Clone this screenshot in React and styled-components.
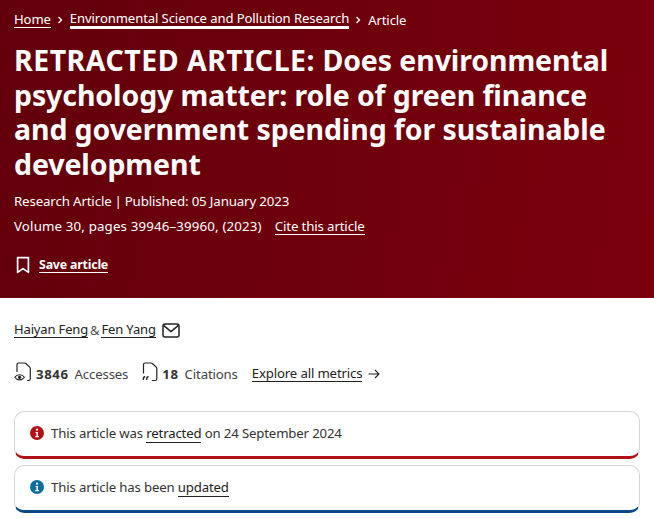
import React from 'react'
import styled, { createGlobalStyle } from 'styled-components'

const Global = createGlobalStyle`
  html, body { margin: 0; padding: 0; background: #fff; }
  body { font-family: "Noto Sans", "Open Sans", sans-serif; color: #222; }
`

function BookmarkIcon() {
  return (
    <svg width="14" height="18" viewBox="0 0 14 18" fill="none" stroke="#fff" strokeWidth="1.7" strokeLinejoin="round">
      <path d="M1.6 1.6h10.8v14.8L7 12.6l-5.4 3.800z" />
    </svg>
  )
}

function MailIcon() {
  return (
    <svg width="18" height="15" viewBox="0 0 18 15" fill="none" stroke="#222" strokeWidth="1.500" strokeLinejoin="round">
      <rect x="1" y="1" width="16" height="13" rx="2" />
      <path d="M1.600 2.400 9 8.600l7.400-6.200" />
    </svg>
  )
}

function AccessIcon() {
  return (
    <svg width="18" height="20" viewBox="0 0 18 20" fill="none" stroke="#222" strokeWidth="1.200" strokeLinecap="round">
      <path d="M3 9.500V2.800Q3 1 4.800 1h5.700q.8 0 1.400.5l3.800 3.600q.6.600.6 1.400v10.200q0 1.800-1.800 1.800h-1" />
      <path d="M.8 15.300c2.300-3.400 7.300-3.400 9.600 0-2.300 3.400-7.300 3.400-9.600 0z" strokeWidth="1.100" />
      <circle cx="5.600" cy="15.300" r="1.600" fill="#222" stroke="none" />
    </svg>
  )
}

function CiteIcon() {
  return (
    <svg width="16" height="20" viewBox="0 0 16 20" fill="none" stroke="#222" strokeWidth="1.200" strokeLinecap="round">
      <path d="M1.500 11V2.800Q1.500 1 3.300 1h5.700q.8 0 1.400.5l3.800 3.600q.6.600.6 1.400v10.200q0 1.800-1.800 1.800h-2.600" />
      <path d="M2.600 14.800q-1.300.5-1.300 2.400M6 14.800q-1.300.5-1.300 2.400" strokeWidth="1.500" />
    </svg>
  )
}

function ArrowIcon() {
  return (
    <svg width="12" height="10" viewBox="0 0 12 10" fill="none" stroke="#222" strokeWidth="1.100">
      <path d="M.5 5h10.500M7 1l4 4-4 4" />
    </svg>
  )
}

function ChevronIcon() {
  return (
    <svg width="7" height="8" viewBox="0 0 7 8" fill="none" stroke="#fff" strokeWidth="1.300">
      <path d="M1.500 1l3 3-3 3" />
    </svg>
  )
}

function InfoIcon({ color }) {
  return (
    <svg width="14" height="14" viewBox="0 0 14 14">
      <circle cx="7" cy="7" r="7" fill={color} />
      <circle cx="7" cy="3.700" r="1.100" fill="#fff" />
      <path d="M5.500 5.900h2.400v4h1v1.300H5.300V9.900h1.100V7.100H5.500z" fill="#fff" />
    </svg>
  )
}

const Hero = styled.header`
  height: 298px;
  box-sizing: border-box;
  padding: 11px 14px 0;
  color: #fff;
  background: linear-gradient(100deg, #62000b 0%, #7a000c 100%);
`

const Crumbs = styled.nav`
  display: flex;
  align-items: center;
  height: 17px;
  font-size: 13.100px;
  letter-spacing: -0.1px;
`

const Crumb = styled.a`
  color: #fff;
  line-height: 16px;
  border-bottom: ${p => p.$thick ? 3 : 1}px solid #fff;
`

const Sep = styled.span`
  display: flex;
  margin: 0 6px;
`

const Title = styled.h1`
  margin: 15px 0 0;
  font-size: 28.500px;
  line-height: 34.600px;
  font-weight: 700;
  letter-spacing: -0.1px;
`

const Prefix = styled.span`
  letter-spacing: 0.5px;
`

const Meta = styled.div`
  display: flex;
  align-items: center;
  font-size: 13.300px;
  line-height: 17px;
  letter-spacing: -0.15px;
  margin-top: ${p => p.$top}px;
`

const Pipe = styled.span`
  margin: 0 3px;
`

const Volume = styled.span`
  letter-spacing: 0.15px;
`

const MetaLink = styled.a`
  margin-left: 13px;
  color: #fff;
  line-height: 15px;
  border-bottom: 1px solid #fff;
`

const Save = styled.div`
  display: flex;
  align-items: center;
  gap: 9px;
  margin: 21px 0 0 2px;
`

const SaveLink = styled.a`
  font-size: 12.400px;
  font-weight: 700;
  line-height: 15px;
  letter-spacing: -0.2px;
  color: #fff;
  border-bottom: 1px solid #fff;
`

const Body = styled.main`
  padding: 23px 14px 0;
  font-size: 13.200px;
  letter-spacing: -0.15px;
`

const Authors = styled.div`
  display: flex;
  align-items: center;
  height: 18px;
  font-size: 13px;
`

const Underlined = styled.a`
  color: #222;
  line-height: 15px;
  border-bottom: 1px solid #222;
`

const Amp = styled.span`
  margin: 0 2px;
  color: #555;
`

const MailSlot = styled.span`
  display: flex;
  margin-left: 6px;
`

const Metrics = styled.div`
  display: flex;
  align-items: center;
  height: 22px;
  margin-top: 24px;
`

const Metric = styled.div`
  display: flex;
  align-items: center;
  margin-right: 14px;
  svg { margin: -4px 4px 0 0; }
`

const Count = styled.b`
  font-weight: 700;
  margin-right: 6px;
  color: #333;
  letter-spacing: 0.6px;
`

const Label = styled.span`
  color: #444;
`

const ArrowSlot = styled.span`
  display: flex;
  margin-left: 6px;
`

const Notices = styled.div`
  display: flex;
  flex-direction: column;
  gap: 6px;
  margin-top: 26px;
`

const Notice = styled.div`
  display: flex;
  align-items: center;
  gap: 7px;
  height: 48px;
  box-sizing: border-box;
  padding: 0 10px 3px 15px;
  border: 1px solid #d5d5d5;
  border-bottom: 3px solid ${p => p.$accent};
  border-radius: 10px;
  background: #fff;
  color: #333;
`

export default function App() {
  return (
    <>
      <Global />
      <Hero>
        <Crumbs>
          <Crumb>Home</Crumb>
          <Sep><ChevronIcon /></Sep>
          <Crumb $thick>Environmental Science and Pollution Research</Crumb>
          <Sep><ChevronIcon /></Sep>
          <span>Article</span>
        </Crumbs>
        <Title>
          <Prefix>RETRACTED ARTICLE:</Prefix> Does environmental<br />
          psychology matter: role of green finance<br />
          and government spending for sustainable<br />
          development
        </Title>
        <Meta $top={12}>Research Article<Pipe>|</Pipe>Published: 05 January 2023</Meta>
        <Meta $top={8}><Volume>Volume 30, pages 39946–39960, (2023)</Volume><MetaLink>Cite this article</MetaLink></Meta>
        <Save>
          <BookmarkIcon />
          <SaveLink>Save article</SaveLink>
        </Save>
      </Hero>
      <Body>
        <Authors>
          <Underlined>Haiyan Feng</Underlined>
          <Amp>&amp;</Amp>
          <Underlined>Fen Yang</Underlined>
          <MailSlot><MailIcon /></MailSlot>
        </Authors>
        <Metrics>
          <Metric>
            <AccessIcon />
            <Count>3846</Count>
            <Label>Accesses</Label>
          </Metric>
          <Metric>
            <CiteIcon />
            <Count>18</Count>
            <Label>Citations</Label>
          </Metric>
          <Underlined>Explore all metrics</Underlined>
          <ArrowSlot><ArrowIcon /></ArrowSlot>
        </Metrics>
        <Notices>
          <Notice $accent="#b01116">
            <InfoIcon color="#b01116" />
            <span>This article was <Underlined>retracted</Underlined> on 24 September 2024</span>
          </Notice>
          <Notice $accent="#0c4a8c">
            <InfoIcon color="#0a6fa0" />
            <span>This article has been <Underlined>updated</Underlined></span>
          </Notice>
        </Notices>
      </Body>
    </>
  )
}
